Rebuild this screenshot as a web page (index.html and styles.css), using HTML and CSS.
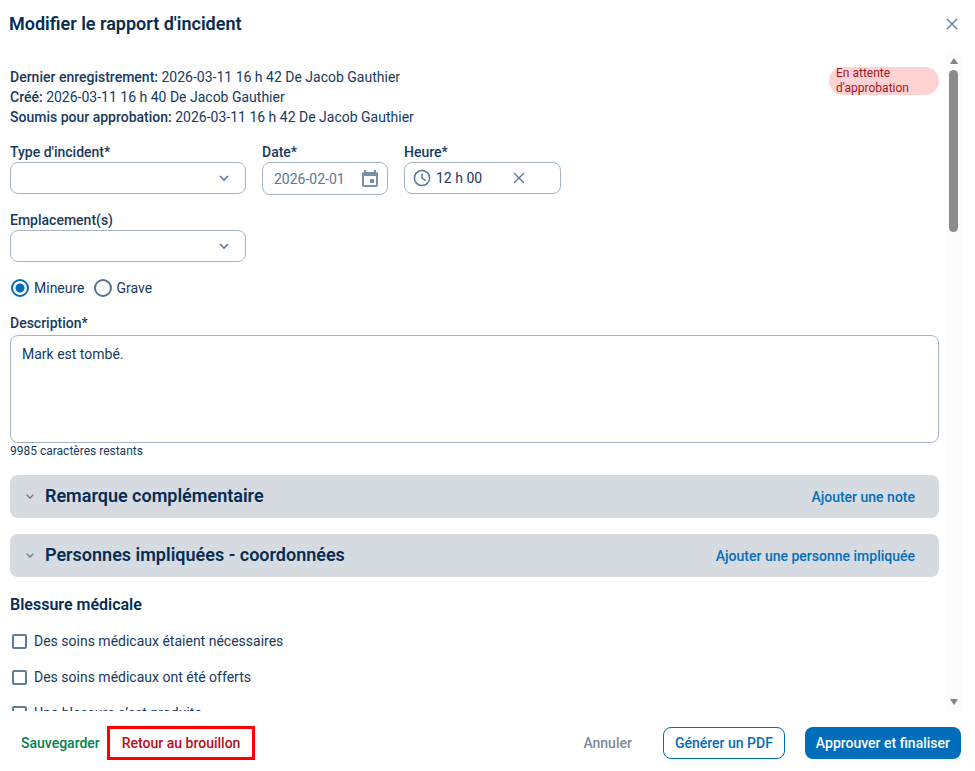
FILE: index.html
```html
<!DOCTYPE html>
<html lang="fr">
<head>
<meta charset="utf-8">
<title>Modifier le rapport d'incident</title>
<link rel="stylesheet" href="styles.css">
</head>
<body>
<form class="dialog">
  <header class="dialog-header">
    <h1>Modifier le rapport d'incident</h1>
    <button type="button" class="icon-button" aria-label="Fermer">
      <svg width="12" height="12" viewBox="0 0 12 12"><path d="M1 1l10 10M11 1L1 11"/></svg>
    </button>
  </header>

  <div class="dialog-body">
    <main class="content">
      <div class="summary">
        <div>
          <p><b>Dernier enregistrement:</b> 2026-03-11 16 h 42 De Jacob Gauthier</p>
          <p><b>Créé:</b> 2026-03-11 16 h 40 De Jacob Gauthier</p>
          <p><b>Soumis pour approbation:</b> 2026-03-11 16 h 42 De Jacob Gauthier</p>
        </div>
        <span class="status">En attente d'approbation</span>
      </div>

      <div class="row">
        <div class="field field-select">
          <label for="type">Type d'incident*</label>
          <div class="control">
            <select id="type"><option></option></select>
            <svg class="chevron" width="10" height="6" viewBox="0 0 10 6"><path d="M1 1l4 4 4-4"/></svg>
          </div>
        </div>
        <div class="field field-date">
          <label for="date">Date*</label>
          <div class="control control-date">
            <input id="date" type="text" value="2026-02-01">
            <svg class="calendar" width="16" height="18" viewBox="0 0 16 18"><path fill-rule="evenodd" d="M2 0h2v2h8V0h2v2q2 0 2 2v11q0 2-2 2H2q-2 0-2-2V4q0-2 2-2zM2 6v9h12V6zM8 9h4v4H8z"/></svg>
          </div>
        </div>
        <div class="field field-time">
          <label for="time">Heure*</label>
          <div class="control control-time">
            <svg class="clock" width="18" height="18" viewBox="0 0 18 18"><circle cx="9" cy="9" r="7.6"/><path d="M9 4.5V9l3.600 2.600"/></svg>
            <input id="time" type="text" value="12 h 00">
            <button type="button" class="icon-button" aria-label="Effacer">
              <svg width="12" height="12" viewBox="0 0 12 12"><path d="M1 1l10 10M11 1L1 11"/></svg>
            </button>
          </div>
        </div>
      </div>

      <div class="row">
        <div class="field field-select">
          <label for="place">Emplacement(s)</label>
          <div class="control">
            <select id="place"><option></option></select>
            <svg class="chevron" width="10" height="6" viewBox="0 0 10 6"><path d="M1 1l4 4 4-4"/></svg>
          </div>
        </div>
      </div>

      <div class="choices">
        <label class="option"><input type="radio" name="severity" checked>Mineure</label>
        <label class="option"><input type="radio" name="severity">Grave</label>
      </div>

      <div class="field description">
        <label for="description">Description*</label>
        <textarea id="description">Mark est tombé.</textarea>
        <p class="hint">9985 caractères restants</p>
      </div>

      <section class="panel">
        <svg class="panel-chevron" width="8" height="5" viewBox="0 0 8 5"><path d="M.6.6L4 4 7.400.6"/></svg>
        <h2>Remarque complémentaire</h2>
        <a href="#note">Ajouter une note</a>
      </section>
      <section class="panel">
        <svg class="panel-chevron" width="8" height="5" viewBox="0 0 8 5"><path d="M.6.6L4 4 7.400.6"/></svg>
        <h2>Personnes impliquées - coordonnées</h2>
        <a href="#personne">Ajouter une personne impliquée</a>
      </section>

      <section class="injury">
        <h3>Blessure médicale</h3>
        <label class="option"><input type="checkbox">Des soins médicaux étaient nécessaires</label>
        <label class="option"><input type="checkbox">Des soins médicaux ont été offerts</label>
        <label class="option"><input type="checkbox">Une blessure s’est produite</label>
      </section>
    </main>

    <div class="scrollbar" aria-hidden="true">
      <svg width="8" height="6" viewBox="0 0 8 6"><path d="M3.500.5h1L8 6H0z"/></svg>
      <div class="track"><div class="thumb"></div></div>
      <svg width="8" height="6" viewBox="0 0 8 6"><path d="M3.500 5.500h1L8 0H0z"/></svg>
    </div>
  </div>

  <footer class="dialog-footer">
    <button type="button" class="button save">Sauvegarder</button>
    <button type="button" class="button draft">Retour au brouillon</button>
    <button type="button" class="button cancel">Annuler</button>
    <button type="button" class="button outline">Générer un PDF</button>
    <button type="button" class="button primary">Approuver et finaliser</button>
  </footer>
</form>
</body>
</html>
```
FILE: styles.css
```css
:root {
  --ink: #173a5e;
  --heading: #062c52;
  --muted: #5b7894;
  --border: #a3b4c6;
  --blue: #006ebb;
}
* { box-sizing: border-box; }
body {
  margin: 0;
  background: #fff;
  color: var(--ink);
  font: 14px/20px Roboto, sans-serif;
}
h1, h2, h3, p { margin: 0; }
h1, h2, h3 { color: var(--heading); font-weight: 600; }
b { font-weight: 500; }
input, select, textarea, button { font: inherit; color: inherit; margin: 0; }
a { color: var(--blue); font-weight: 500; text-decoration: none; }
svg { flex: none; display: block; }

.dialog { display: flex; flex-direction: column; height: 100vh; }
.dialog-header {
  display: flex;
  align-items: center;
  justify-content: space-between;
  height: 52px;
  padding: 0 17px 4px 9px;
}
h1 { font-size: 18px; line-height: 24px; }
.icon-button { display: flex; padding: 0; border: 0; background: none; }
.icon-button svg { fill: none; stroke: var(--muted); stroke-width: 1.4; }

.dialog-body { display: flex; flex: 1; min-height: 0; overflow: hidden; padding-right: 14px; }
.content { flex: 1; min-width: 0; padding: 15px 7px 0 10px; }

.summary { display: flex; justify-content: space-between; align-items: flex-start; margin-bottom: 16px; }
.status {
  width: 110px;
  height: 28px;
  padding: 0 7px;
  border-radius: 14px;
  background: #ffd3d3;
  color: #a3151b;
  font-size: 12px;
  line-height: 15px;
  display: flex;
  align-items: center;
}

.row { display: flex; gap: 16px; align-items: flex-start; margin-bottom: 16px; }
.field { display: flex; flex-direction: column; }
.field > label { font-weight: 500; line-height: 19px; }
.field-select { width: 236px; }
.field-date { width: 126px; }
.field-time { width: 157px; }
.control {
  position: relative;
  display: flex;
  align-items: center;
  height: 32px;
  border: 1px solid var(--border);
  border-radius: 8px;
}
.control input, .control select {
  appearance: none;
  flex: 1;
  min-width: 0;
  height: 100%;
  padding: 0;
  border: 0;
  outline: 0;
  background: none;
}
.chevron { position: absolute; right: 16px; fill: none; stroke: var(--muted); stroke-width: 1.7; pointer-events: none; }
.control-date { height: 33px; padding: 0 9px 0 11px; color: var(--muted); }
.calendar { fill: #7890a8; }
.control-time { gap: 5px; padding: 0 35px 0 8px; }
.clock { fill: none; stroke: var(--muted); stroke-width: 1.5; }

.choices { display: flex; gap: 8px; margin-bottom: 16px; }
.option { display: flex; align-items: center; gap: 5px; padding-left: 1px; }
.option input { appearance: none; width: 18px; height: 18px; flex: none; background: #fff; }
.option input[type="radio"] { border: 2px solid #5c738a; border-radius: 50%; }
.option input[type="radio"]:checked {
  border-color: var(--blue);
  background: radial-gradient(circle, var(--blue) 4px, #fff 5px);
}
.option input[type="checkbox"] {
  width: 15px;
  height: 15px;
  margin: 0 2px 0 1px;
  border: 2px solid #607d99;
  border-radius: 2px;
}

.description { margin-bottom: 16px; }
textarea {
  height: 108px;
  margin-top: 2px;
  padding: 8px 11px;
  border: 1px solid var(--border);
  border-radius: 8px;
  resize: none;
  outline: 0;
}
.hint { font-size: 12px; line-height: 16px; }

.panel {
  display: flex;
  align-items: center;
  height: 43px;
  margin-bottom: 16px;
  padding: 0 24px 0 16px;
  border-radius: 8px;
  background: #d6dbe2;
}
.panel-chevron { margin-right: 11px; fill: none; stroke: var(--muted); stroke-width: 1.3; }
h2 { flex: 1; padding-bottom: 2px; font-size: 18px; line-height: 24px; }

h3 { font-size: 16px; line-height: 20px; }
.injury { display: flex; flex-direction: column; align-items: flex-start; gap: 16px; padding-top: 2px; }

.scrollbar {
  display: flex;
  flex-direction: column;
  align-items: center;
  width: 15px;
  padding: 6px 0;
  background: #fcfcfc;
}
.scrollbar svg { fill: #858585; }
.track { flex: 1; margin: 6px 0; }
.thumb { width: 9px; height: 26%; border-radius: 5px; background: #8b8b8b; }

.dialog-footer {
  display: flex;
  align-items: center;
  flex: none;
  height: 60px;
  padding: 3px 14px 0 13px;
}
.button { height: 32px; padding: 0 8px; border: 0; border-radius: 8px; background: none; font-weight: 500; white-space: nowrap; }
.save { padding-right: 7px; color: #00834f; }
.draft { height: 34px; padding: 0 12px; border: 3px solid #f00; border-radius: 0; color: #b80d12; }
.cancel { margin-left: auto; margin-right: 23px; color: #7e8b99; }
.outline { padding: 0 11px; border: 1px solid var(--blue); color: var(--blue); margin-right: 20px; }
.primary { padding: 0 11px; background: var(--blue); color: #fff; }
```
